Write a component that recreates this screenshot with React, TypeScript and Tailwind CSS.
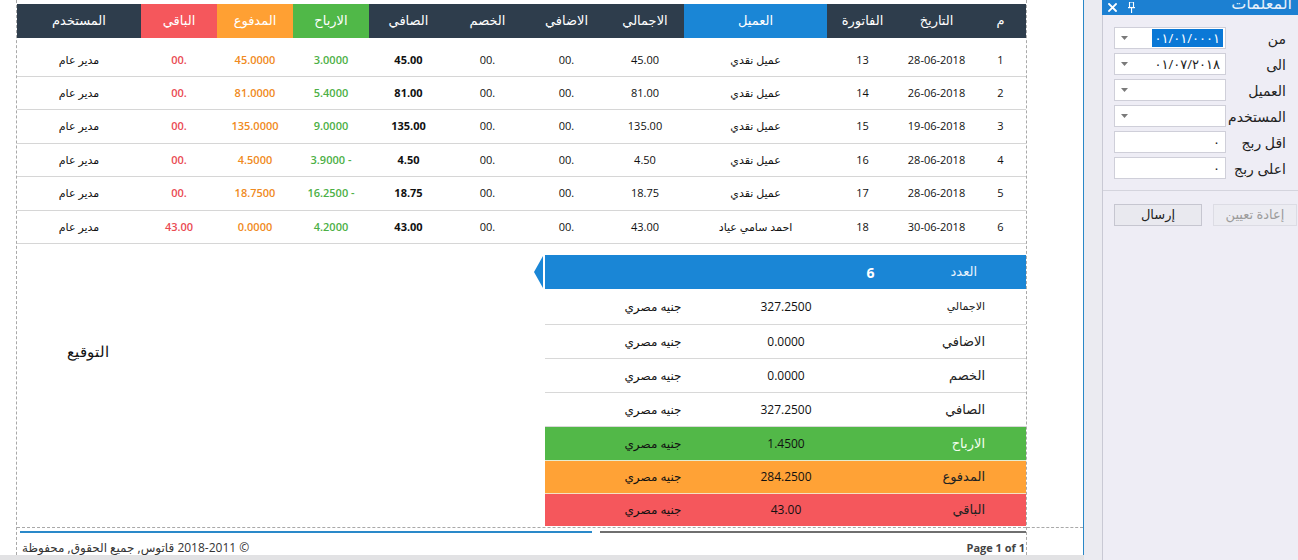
import React from "react";

const FONT = "font-['Open_Sans','DejaVu_Sans',sans-serif]";

const headers = [
  { t: "المستخدم", c: "" },
  { t: "الباقي", c: "bg-[#f5575c]" },
  { t: "المدفوع", c: "bg-[#ffa033]" },
  { t: "الارباح", c: "bg-[#50b848]" },
  { t: "الصافي", c: "" },
  { t: "الخصم", c: "" },
  { t: "الاضافي", c: "" },
  { t: "الاجمالي", c: "" },
  { t: "العميل", c: "bg-[#1a86d6]" },
  { t: "الفاتورة", c: "" },
  { t: "التاريخ", c: "" },
  { t: "م", c: "" },
];

type Row = {
  n: string;
  d: string;
  inv: string;
  cl: string;
  tot: string;
  net: string;
  pr: string;
  paid: string;
  rem: string;
  h: string;
};

const rows: Row[] = [
  { n: "1", d: "28-06-2018", inv: "13", cl: "عميل نقدي", tot: "45.00", net: "45.00", pr: "3.0000", paid: "45.0000", rem: "00.", h: "h-[39px] pt-[7px]" },
  { n: "2", d: "26-06-2018", inv: "14", cl: "عميل نقدي", tot: "81.00", net: "81.00", pr: "5.4000", paid: "81.0000", rem: "00.", h: "h-[33px]" },
  { n: "3", d: "19-06-2018", inv: "15", cl: "عميل نقدي", tot: "135.00", net: "135.00", pr: "9.0000", paid: "135.0000", rem: "00.", h: "h-[34px]" },
  { n: "4", d: "28-06-2018", inv: "16", cl: "عميل نقدي", tot: "4.50", net: "4.50", pr: "3.9000 -", paid: "4.5000", rem: "00.", h: "h-[33px]" },
  { n: "5", d: "28-06-2018", inv: "17", cl: "عميل نقدي", tot: "18.75", net: "18.75", pr: "16.2500 -", paid: "18.7500", rem: "00.", h: "h-[34px]" },
  { n: "6", d: "30-06-2018", inv: "18", cl: "احمد سامي عياد", tot: "43.00", net: "43.00", pr: "4.2000", paid: "0.0000", rem: "43.00", h: "h-[33px]" },
];

const summary = [
  { l: "الاجمالي", v: "327.2500", bg: "border-b border-[#d8d8d8]", h: "h-[36px]", lc: "text-[11px] text-[#222]" },
  { l: "الاضافي", v: "0.0000", bg: "border-b border-[#d8d8d8]", h: "h-[34px]", lc: "text-[13px] text-[#222]" },
  { l: "الخصم", v: "0.0000", bg: "border-b border-[#d8d8d8]", h: "h-[34px]", lc: "text-[13px] text-[#222]" },
  { l: "الصافي", v: "327.2500", bg: "border-b border-[#d8d8d8]", h: "h-[34px]", lc: "text-[13px] text-[#222]" },
  { l: "الارباح", v: "1.4500", bg: "bg-[#52b848] border-b border-[#e6eccf]", h: "h-[34px]", lc: "text-[13px] text-[#f4fff0]" },
  { l: "المدفوع", v: "284.2500", bg: "bg-[#ffa236] border-b border-[#f6e2c2]", h: "h-[33px]", lc: "text-[13px] text-[#222]" },
  { l: "الباقي", v: "43.00", bg: "bg-[#f5575c]", h: "h-[32px]", lc: "text-[13px] text-[#222]" },
];

const GRID = "grid grid-cols-[124px_76px_76px_76px_79px_79px_79px_78px_143px_71px_77px_51px]";

function Caret() {
  return (
    <svg width="7" height="4" viewBox="0 0 7 4">
      <polygon points="0,0 7,0 3.5,4" fill="#7a7a7a" />
    </svg>
  );
}

function Field({ label, value, dropdown, selected }: { label: string; value?: string; dropdown?: boolean; selected?: boolean }) {
  return (
    <div className="flex items-center h-[22px]">
      <div className="ml-[11px] w-[112px] h-[22px] bg-white border border-[#cfcfd9] flex items-center justify-between pl-[6px] pr-[2px]">
        <span className="flex items-center">{dropdown ? <Caret /> : null}</span>
        {value ? (
          <span
            className={
              selected
                ? "bg-[#0a78d6] text-white text-[13px] leading-[18px] px-[3px]"
                : "text-[#222] text-[13px] leading-[18px] px-[3px]"
            }
          >
            {value}
          </span>
        ) : null}
      </div>
      <div className="flex-1 text-right pr-[12px] text-[14px] text-[#222]">{label}</div>
    </div>
  );
}

function PinIcon() {
  return (
    <svg width="7" height="11" viewBox="0 0 7 11">
      <rect x="0" y="5" width="7" height="1.2" fill="white" />
      <rect x="1.5" y="0" width="4" height="5.5" fill="none" stroke="white" strokeWidth="1.1" />
      <rect x="3" y="6" width="1.1" height="5" fill="white" />
    </svg>
  );
}

function CloseIcon() {
  return (
    <svg width="9" height="9" viewBox="0 0 9 9">
      <path d="M1 1 L8 8 M8 1 L1 8" stroke="white" strokeWidth="1.8" strokeLinecap="square" />
    </svg>
  );
}

export default function App() {
  return (
    <div className={`w-[1298px] h-[560px] flex overflow-hidden bg-white ${FONT}`}>
      {/* Report viewer area */}
      <div className="w-[1084px] h-[560px] flex flex-col">
        <div className="h-[555px] flex border-r border-[#2a87c7]">
          <div className="w-[16px]" />
          {/* page column */}
          <div className="w-[1011px] flex flex-col border-l border-r border-dashed border-[#a9a9a9]">
            <div className="h-[528px] border-b border-dashed border-[#a9a9a9] flex flex-col">
              {/* table header */}
              <div className={`${GRID} mt-[4px] h-[34px] bg-[#2e3d4c]`}>
                {headers.map((h, i) => (
                  <div key={i} className={`flex items-center justify-center text-white text-[13px] ${h.c}`}>
                    {h.t}
                  </div>
                ))}
              </div>
              {/* table rows */}
              {rows.map((r, i) => (
                <div key={i} className={`${GRID} ${r.h} border-b border-[#d6d6d6] text-[11px] text-[#111]`}>
                  <div className="flex items-center justify-center">مدير عام</div>
                  <div className="flex items-center justify-center font-semibold text-[#ea4b53]">{r.rem}</div>
                  <div className="flex items-center justify-center font-semibold text-[#f08a22]">{r.paid}</div>
                  <div className="flex items-center justify-center font-semibold text-[#4cb046]">{r.pr}</div>
                  <div className="flex items-center justify-center font-bold">{r.net}</div>
                  <div className="flex items-center justify-center">00.</div>
                  <div className="flex items-center justify-center">00.</div>
                  <div className="flex items-center justify-center">{r.tot}</div>
                  <div className="flex items-center justify-center">{r.cl}</div>
                  <div className="flex items-center justify-center">{r.inv}</div>
                  <div className="flex items-center justify-center">{r.d}</div>
                  <div className="flex items-center justify-center">{r.n}</div>
                </div>
              ))}
              {/* below table */}
              <div className="flex flex-1">
                <div className="pl-[50px] pt-[96px] text-[15px] font-light text-[#111]">التوقيع</div>
                <div className="ml-auto mt-[11px] flex">
                  <svg width="9" height="34" viewBox="0 0 9 34" className="block">
                    <polygon points="9,1 0,17 9,33" fill="#1a86d6" />
                  </svg>
                  <div className="w-[2px]" />
                  <div className="w-[481px] flex flex-col">
                    <div className="h-[34px] bg-[#1a86d6] flex items-center justify-end pr-[49px] gap-[76px]">
                      <span className="text-white font-bold text-[14px]">6</span>
                      <span className="text-[#e8f2fc] text-[13px]">العدد</span>
                    </div>
                    {summary.map((s, i) => (
                      <div key={i} className={`grid grid-cols-[176px_130px_1fr] items-center ${s.h} ${s.bg}`}>
                        <div className="pl-[40px] text-center text-[12px] text-[#111]">جنيه مصري</div>
                        <div className="text-center text-[12px] text-[#111]">{s.v}</div>
                        <div className={`text-right pr-[41px] ${s.lc}`}>{s.l}</div>
                      </div>
                    ))}
                  </div>
                </div>
              </div>
            </div>
            {/* footer */}
            <div className="flex-1 overflow-hidden flex flex-col">
              <div className="flex mt-[3px]">
                <div className="ml-[3px] w-[572px] h-[2px] bg-[#2a89c9]" />
                <div className="ml-[8px] flex-1 h-[2px] bg-[#6f6f6f]" />
              </div>
              <div className="flex items-center justify-between mt-[7px] pl-[5px] pr-[1px]">
                <span dir="rtl" className="text-[12px] text-[#333] leading-[16px]">
                  © 2018-2011 قاتوس, جميع الحقوق, محفوظة
                </span>
                <span className="text-[11px] font-bold text-[#444] leading-[16px]">Page 1 of 1</span>
              </div>
            </div>
          </div>
          {/* right white area */}
          <div className="flex-1">
            <div className="h-[528px] border-b border-dashed border-[#a9a9a9]" />
          </div>
        </div>
        <div className="h-[5px] bg-[#e2e2e4]" />
      </div>

      {/* gap strip */}
      <div className="w-[18px] h-full bg-[#ebebf1]" />

      {/* parameters panel */}
      <div className="w-[196px] h-full bg-[#eeedf5] flex flex-col">
        <div className="h-[15px] bg-[#1c80d2] flex items-center overflow-hidden">
          <span className="ml-[6px] flex items-center">
            <CloseIcon />
          </span>
          <span className="ml-[11px] flex items-center">
            <PinIcon />
          </span>
          <span className="ml-auto mr-[6px] text-[16px] text-[#e6f0fa] leading-none mt-[-10px]">المعلمات</span>
        </div>
        <div className="flex-1 border-l border-[#c9c9d4] flex flex-col">
          <div className="pt-[12px] flex flex-col gap-[4px]">
            <Field label="من" value="٠١/٠١/٠٠٠١" dropdown selected />
            <Field label="الى" value="٠١/٠٧/٢٠١٨" dropdown />
            <Field label="العميل" dropdown />
            <Field label="المستخدم" dropdown />
            <Field label="اقل ربج" value="٠" />
            <Field label="اعلى ربج" value="٠" />
          </div>
          <div className="mt-[11px] border-t border-[#d4d4dd]" />
          <div className="mt-[13px] flex gap-[11px] ml-[11px] overflow-hidden">
            <div className="w-[88px] h-[22px] shrink-0 bg-[#e9e9ef] border border-[#c6c6d0] flex items-center justify-center text-[13px] text-[#222]">
              إرسال
            </div>
            <div className="w-[84px] h-[22px] shrink-0 bg-[#ececf2] border border-[#dcdce4] flex items-center justify-center text-[13px] text-[#9c9c9c]">
              إعادة تعيين
            </div>
          </div>
        </div>
      </div>
    </div>
  );
}
